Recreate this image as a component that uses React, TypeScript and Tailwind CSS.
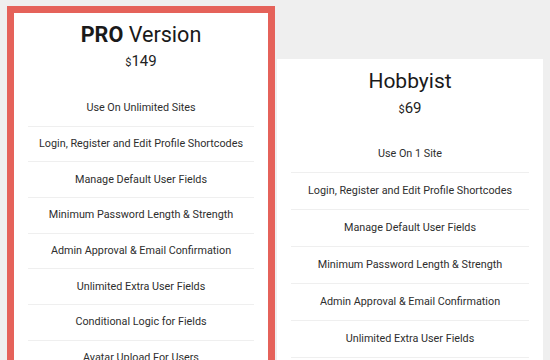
const proFeatures = [
  "Use On Unlimited Sites",
  "Login, Register and Edit Profile Shortcodes",
  "Manage Default User Fields",
  "Minimum Password Length & Strength",
  "Admin Approval & Email Confirmation",
  "Unlimited Extra User Fields",
  "Conditional Logic for Fields",
  "Avatar Upload For Users",
];

const hobbyistFeatures = [
  "Use On 1 Site",
  "Login, Register and Edit Profile Shortcodes",
  "Manage Default User Fields",
  "Minimum Password Length & Strength",
  "Admin Approval & Email Confirmation",
  "Unlimited Extra User Fields",
  "Conditional Logic for Fields",
];

export default function App() {
  return (
    <main
      className="flex h-[360px] w-[550px] items-start overflow-hidden bg-[#efefef] pl-[7px] pt-[6px]"
      style={{ fontFamily: "Roboto, 'Liberation Sans', sans-serif" }}
    >
      <section className="w-[268px] shrink-0 border-[7px] border-[#e5625a] bg-white pt-[8px]">
        <h2 className="text-center text-[21.6px] leading-[28px] text-[#1a1a1a]">
          <span className="font-bold">PRO</span> Version
        </h2>
        <p className="mt-[2px] text-center text-[15px] leading-[20px] text-[#222]">
          <span className="text-[11px]">$</span>149
        </p>

        <ul className="mt-[18px]">
          {proFeatures.map((feature) => (
            <li
              key={feature}
              className="mx-[14px] flex h-[35.7px] items-center justify-center whitespace-nowrap border-b border-[#efefef] text-[10.8px] text-[#2e2e2e]"
            >
              {feature}
            </li>
          ))}
        </ul>
      </section>

      <section className="ml-[2px] mt-[53px] w-[266px] shrink-0 bg-white pt-[8px]">
        <h2 className="text-center text-[21px] leading-[28px] text-[#1a1a1a]">
          Hobbyist
        </h2>
        <p className="mt-[3px] text-center text-[15px] leading-[20px] text-[#222]">
          <span className="text-[11px]">$</span>69
        </p>

        <ul className="mt-[16px]">
          {hobbyistFeatures.map((feature) => (
            <li
              key={feature}
              className="mx-[14px] flex h-[37px] items-center justify-center whitespace-nowrap border-b border-[#efefef] text-[10.8px] text-[#2e2e2e]"
            >
              {feature}
            </li>
          ))}
        </ul>
      </section>
    </main>
  );
}
